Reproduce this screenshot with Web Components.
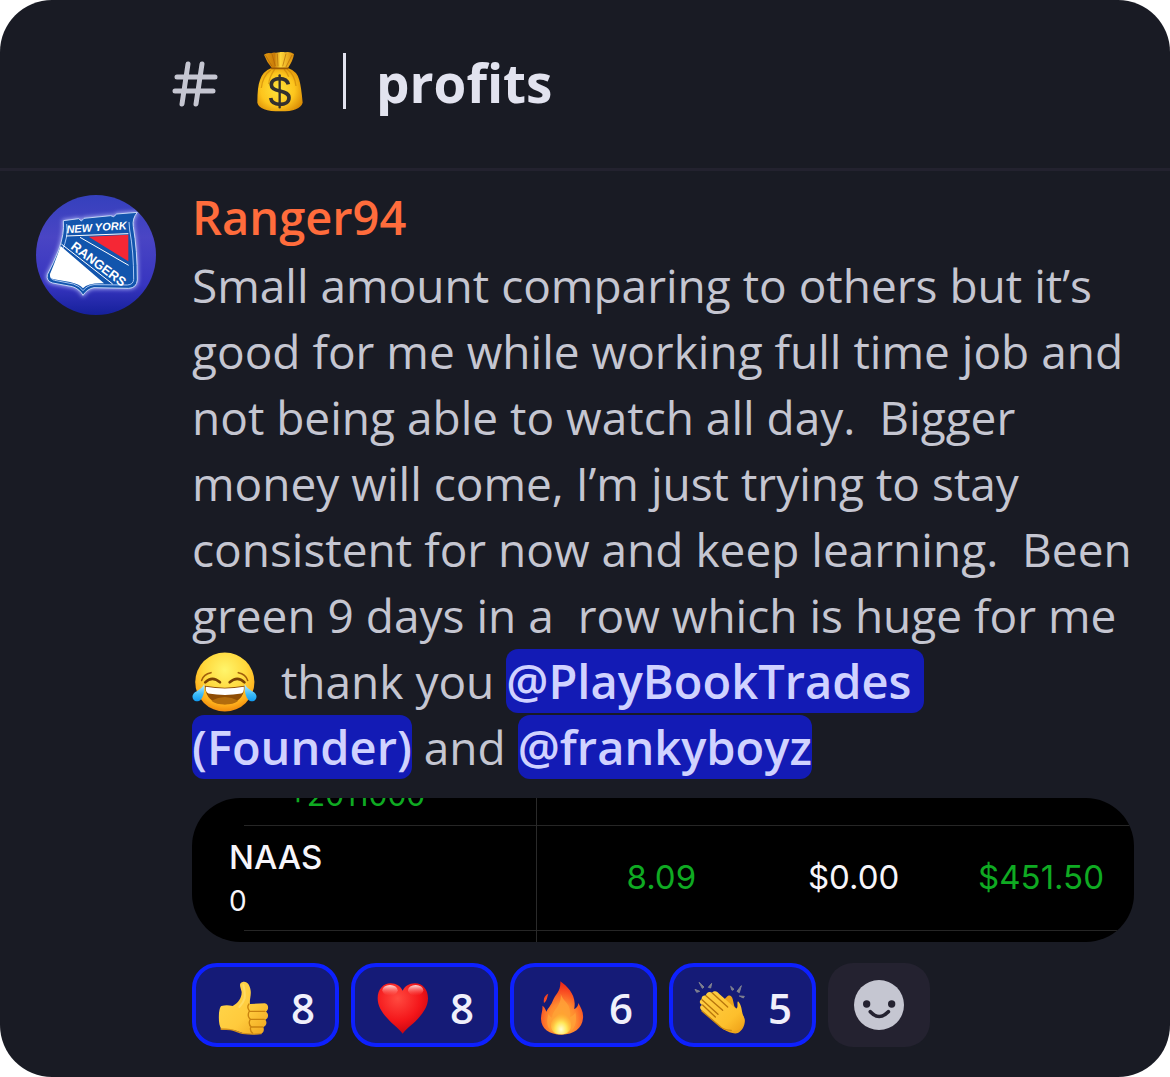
<!DOCTYPE html>
<html lang="en">
<head>
  <meta charset="UTF-8">
  <meta name="viewport" content="width=device-width, initial-scale=1.0">
  <title>profits</title>
  <style>
    body {
      margin: 0;
      background: #fff;
      color: #c5c6d1;
      font-family: "Open Sans", "Noto Sans", sans-serif;
    }
  </style>
</head>
<body>
  <chat-panel>
    <channel-header slot="header" emoji="bag">profits</channel-header>
    <chat-message author="Ranger94">Small amount comparing to others but it’s good for me while working full time job and not being able to watch all day.  Bigger money will come, I’m just trying to stay consistent for now and keep learning.  Been green 9 days in a  row which is huge for me <emoji-icon name="joy"></emoji-icon>  thank you <user-mention>@PlayBookTrades (Founder)</user-mention> and <user-mention>@frankyboyz</user-mention><trade-card slot="attachment"></trade-card><reaction-button slot="reactions" emoji="thumb" count="8"></reaction-button><reaction-button slot="reactions" emoji="heart" count="8"></reaction-button><reaction-button slot="reactions" emoji="fire" count="6"></reaction-button><reaction-button slot="reactions" emoji="clap" count="5"></reaction-button><add-reaction slot="reactions"></add-reaction></chat-message>
  </chat-panel>

  <script>
    const emojis = {
      bag: {
        label: "money bag",
        width: 48,
        height: 60,
        svg: `<svg viewBox="48 36 144 180">
          <defs>
            <radialGradient id="g" cx=".45" cy=".5" r=".62">
              <stop offset="0" stop-color="#ffe23a"/><stop offset=".6" stop-color="#fdc51d"/><stop offset="1" stop-color="#d98a05"/>
            </radialGradient>
            <linearGradient id="n" x1="0" x2="1" y1="0" y2="0">
              <stop offset="0" stop-color="#e39a10"/><stop offset=".35" stop-color="#c97c08"/><stop offset=".55" stop-color="#ffd63a"/><stop offset="1" stop-color="#d98a0a"/>
            </linearGradient>
          </defs>
          <path d="M72 44q10-8 22-4 6-4 14-2l10-1q8-3 18 0 14-3 26 5-2 18-18 42l-48 1Q80 66 72 44z" fill="url(#n)"/>
          <path d="M76 45l20 34M96 42l10 36M112 41l2 38M138 41l-10 38M156 45l-18 36" stroke="#a85f04" stroke-width="3" fill="none" opacity=".6"/>
          <path d="M94 84h50q28 10 34 36 6 22 10 68-8 26-66 26-64 0-70-26 0-48 8-68 8-26 34-36z" fill="url(#g)"/>
          <path d="M92 90q-24 18-28 54M104 88q-16 22-18 44M142 88q22 16 26 50M132 88q10 10 14 22" stroke="#c27a05" stroke-width="4" fill="none" opacity=".55"/>
          <path d="M94 85h50" stroke="#9c5a04" stroke-width="5" stroke-linecap="round"/>
          <path d="M145 133c-3-12-13-17-26-17-15 0-25 7-25 18 0 12 11 16 26 19 16 4 27 8 27 20 0 13-12 20-27 20-16 0-26-7-28-19" fill="none" stroke="#33302f" stroke-width="11"/>
          <path d="M119 106v96" stroke="#33302f" stroke-width="7" stroke-linecap="round"/>
        </svg>`,
      },
      joy: {
        label: "face with tears of joy",
        width: 65,
        height: 62,
        svg: `<svg viewBox="58 32 202 188">
          <defs>
            <radialGradient id="g" cx=".5" cy=".3" r=".72">
              <stop offset="0" stop-color="#fff56b"/><stop offset=".5" stop-color="#ffd83c"/><stop offset=".82" stop-color="#ffae1b"/><stop offset="1" stop-color="#ed8209"/>
            </radialGradient>
            <linearGradient id="t" x1="0" x2="0" y1="0" y2="1">
              <stop offset="0" stop-color="#c8f1ff"/><stop offset=".6" stop-color="#3cbcf8"/><stop offset="1" stop-color="#109af0"/>
            </linearGradient>
          </defs>
          <circle cx="160" cy="126" r="92" fill="url(#g)"/>
          <path d="M98 138q62 11 124 0-4 56-62 57-58-1-62-57z" fill="#8f4d04"/>
          <path d="M118 184q42-22 84 0-16 12-42 12t-42-12z" fill="#b26c0d"/>
          <path d="M101 141q59 10 118 0 2 18-8 21-50 9-102 0-10-4-8-21z" fill="#fff"/>
          <path d="M99 127q22-22 46 0M175 127q24-22 46 0" stroke="#7a4204" stroke-width="8" stroke-linecap="round" fill="none"/>
          <path d="M88 121q6-20 29-24M231 121q-6-20-29-24" stroke="#a2600c" stroke-width="5" stroke-linecap="round" fill="none"/>
          <path d="M96 132c2 20-2 39-11 49-7 7-17 6-22 0-6-7-4-16 4-23 12-8 21-11 29-26z" fill="url(#t)"/>
          <path d="M222 132c-2 20 2 39 11 49 7 7 17 6 22 0 6-7 4-16-4-23-12-8-21-11-29-26z" fill="url(#t)"/>
        </svg>`,
      },
      thumb: {
        label: "thumbs up",
        width: 52,
        height: 54,
        svg: `<svg viewBox="111 80 156 162">
          <defs>
            <linearGradient id="g" x1="0" x2="1" y1="0" y2="1">
              <stop offset="0" stop-color="#ffd94e"/><stop offset=".6" stop-color="#ffca3c"/><stop offset="1" stop-color="#eda31c"/>
            </linearGradient>
          </defs>
          <path d="M124 155q16-4 34 0c16-9 27-22 27-42-4-16-10-26 3-30 14-3 22 10 24 26 2 14-4 26-2 40l44-2c13 2 13 20 4 25 9 6 8 20-2 24 6 7 4 19-6 22 4 9 0 20-10 21-24 2-45 1-58-5-12-5-18-8-32-7-10 0-18-3-25-1-9-12-9-32-8-50q2-18 7-21z" fill="url(#g)"/>
          <path d="M207 149q-8 10 2 22h46M207 172q-6 14 4 23h42M210 196q-6 14 4 22h34M212 219q-3 10 6 18" fill="none" stroke="#c9820f" stroke-width="4" stroke-linecap="round"/>
          <path d="M123 224q18 0 28 2c12 0 22 9 36 11q30 4 56 1" fill="none" stroke="#d5901b" stroke-width="4" stroke-linecap="round"/>
          <path d="M190 92q6 24 4 40-4 14-16 26" fill="none" stroke="#ffe47c" stroke-width="6" stroke-linecap="round" opacity=".6"/>
        </svg>`,
      },
      heart: {
        label: "red heart",
        width: 52,
        height: 54,
        svg: `<svg viewBox="588 80 156 162">
          <defs>
            <radialGradient id="g" cx=".4" cy=".3" r=".75">
              <stop offset="0" stop-color="#ff4a40"/><stop offset=".6" stop-color="#f4161a"/><stop offset="1" stop-color="#c20410"/>
            </radialGradient>
            <linearGradient id="w" x1="0" x2="0" y1="0" y2="1">
              <stop offset="0" stop-color="#fff" stop-opacity=".85"/><stop offset="1" stop-color="#ff6a60" stop-opacity="0"/>
            </linearGradient>
          </defs>
          <path d="M668 238c-10-14-28-26-44-44-18-19-31-38-31-62 0-27 17-45 39-45 17 0 29 9 36 22 7-13 19-22 37-22 22 0 39 18 39 45 0 24-14 43-31 62-17 18-35 30-45 44z" fill="url(#g)"/>
          <ellipse cx="630" cy="108" rx="23" ry="16" fill="url(#w)"/>
          <ellipse cx="707" cy="108" rx="23" ry="16" fill="url(#w)"/>
        </svg>`,
      },
      fire: {
        label: "fire",
        width: 52,
        height: 54,
        svg: `<svg viewBox="105 80 156 162">
          <defs>
            <radialGradient id="g" cx=".5" cy=".75" r=".75">
              <stop offset="0" stop-color="#ffb62c"/><stop offset=".45" stop-color="#ff8a30"/><stop offset=".75" stop-color="#f94c22"/><stop offset="1" stop-color="#e82216"/>
            </radialGradient>
            <radialGradient id="y" cx=".5" cy=".8" r=".65">
              <stop offset="0" stop-color="#fffdd2"/><stop offset=".45" stop-color="#ffe657"/><stop offset="1" stop-color="#ffa52b" stop-opacity=".3"/>
            </radialGradient>
          </defs>
          <path d="M181 81c20 14 42 36 43 66 0 8 0 12-2 17 8-2 13-10 13-18 8 14 16 28 14 46-2 30-28 49-64 49-38 0-61-18-62-47 0-16 6-26 4-40 8 5 10 12 12 18 6-12 14-18 20-34 6-18 24-26 22-57zM145 118c-10 4-16 14-13 28 10-8 9-18 13-28z" fill="url(#g)"/>
          <path d="M182 118c6 22 28 28 28 54 2 6 0 12 0 16 8-2 14-8 16-14 8 38-8 66-42 66-38 0-50-30-38-62 2 6 6 10 10 12 2-26 30-34 26-72z" fill="#ffa338" opacity=".75"/>
          <path d="M186 166c10 16 20 22 26 36 6 22-6 38-29 38s-34-16-29-36c6-16 26-22 32-38z" fill="url(#y)"/>
        </svg>`,
      },
      clap: {
        label: "clapping hands",
        width: 52,
        height: 54,
        svg: `<svg viewBox="582 80 156 162">
          <defs>
            <linearGradient id="g" x1="0" x2="1" y1="0" y2="1">
              <stop offset="0" stop-color="#ffd148"/><stop offset=".7" stop-color="#fdbf2c"/><stop offset="1" stop-color="#ee9f17"/>
            </linearGradient>
          </defs>
          <path d="M597 84l10 18 5-4zM585 105l14 6-9 3zM635 87l-10 12 7 2zM692 96l4 12 6-3zM724 94l-13 17 7 4zM733 126l-15-1 12 6z" fill="#7f8190" stroke="#7f8190" stroke-width="3"/>
          <path d="M680 128c8-8 15-4 18 6l5 22c8 12 26 20 31 38 3 16-6 35-20 42-12 4-28-2-46-12l-34-50z" fill="#eda41c"/>
          <path d="M636 115c8-8 16-4 22 4l50 44c8-2 2-18 6-22 12 12 10 28 16 44 8 20-2 34-16 42-14 6-36 6-50-8l-58-50c-8-6-7-14 0-17-8-5-9-12-1-18-1-8 6-12 12-10 2-9 10-14 19-9z" fill="url(#g)"/>
          <path d="M608 152l38 36M606 136l48 44M618 124l50 44M637 116l46 42" fill="none" stroke="#b8750c" stroke-width="4" stroke-linecap="round"/>
          <path d="M606 170l56 48q14 10 32 10" fill="none" stroke="#d18b12" stroke-width="4" stroke-linecap="round"/>
        </svg>`,
      },
    };

    class EmojiIcon extends HTMLElement {
      constructor() {
        super();
        this.attachShadow({ mode: "open" });
      }

      connectedCallback() {
        const emoji = emojis[this.getAttribute("name")];
        this.setAttribute("role", "img");
        this.setAttribute("aria-label", emoji.label);
        this.shadowRoot.innerHTML = `
          <style>
            :host {
              display: inline-block;
              width: ${emoji.width}px;
              height: ${emoji.height}px;
              line-height: 0;
              white-space: normal;
              vertical-align: -14px;
            }
            svg {
              width: 100%;
              height: 100%;
            }
          </style>
          ${emoji.svg}`;
      }
    }

    class ChatPanel extends HTMLElement {
      constructor() {
        super();
        this.attachShadow({ mode: "open" }).innerHTML = `
          <style>
            :host {
              display: flex;
              flex-direction: column;
              box-sizing: border-box;
              min-height: 100vh;
              background: #191b24;
              border-radius: 52px;
              overflow: hidden;
            }
            main {
              padding: 16px 36px 30px;
            }
          </style>
          <slot name="header"></slot>
          <main><slot></slot></main>`;
      }
    }

    class ChannelHeader extends HTMLElement {
      constructor() {
        super();
        this.attachShadow({ mode: "open" });
      }

      connectedCallback() {
        this.shadowRoot.innerHTML = `
          <style>
            header {
              display: flex;
              align-items: center;
              height: 168px;
              padding: 0 36px 0 172px;
              border-bottom: 3px solid #23222f;
            }
            .hash {
              width: 46px;
              height: 46px;
              margin-right: 38px;
            }
            .divider {
              width: 3px;
              height: 56px;
              margin: 0 30px 6px 39px;
              background: #e2e3ef;
            }
            emoji-icon {
              margin-bottom: 4px;
            }
            h1 {
              margin: 0 0 2px;
              color: #e2e3ef;
              font-size: 53px;
              font-weight: 700;
              line-height: 64px;
            }
          </style>
          <header>
            <svg class="hash" viewBox="0 0 46 46" fill="none" stroke="#c5c6d1" stroke-width="5" stroke-linecap="round" aria-hidden="true">
              <path d="M5 16h38M3 30h38M16 3l-6 40M30 3l-6 40"/>
            </svg>
            <emoji-icon name="${this.getAttribute("emoji")}"></emoji-icon>
            <span class="divider"></span>
            <h1><slot></slot></h1>
          </header>`;
      }
    }

    class UserAvatar extends HTMLElement {
      constructor() {
        super();
        this.attachShadow({ mode: "open" }).innerHTML = `
          <style>
            :host {
              display: block;
              width: 120px;
              height: 120px;
              border-radius: 50%;
              overflow: hidden;
            }
            svg {
              display: block;
            }
            text {
              font-family: "Liberation Sans", sans-serif;
              font-weight: 700;
              fill: #fff;
            }
          </style>
          <svg viewBox="48 45 360 360" width="120" height="120">
            <defs>
              <linearGradient id="bg" x1="0" x2="0" y1="0" y2="1">
                <stop offset="0" stop-color="#3540bd"/><stop offset=".35" stop-color="#4a45c4"/><stop offset=".75" stop-color="#3735c0"/><stop offset="1" stop-color="#15209a"/>
              </linearGradient>
              <filter id="glow" x="-20%" y="-20%" width="140%" height="140%"><feGaussianBlur stdDeviation="6"/></filter>
              <path id="shield" d="M130 122L176 116 184 123 192 115 272 107 281 110 290 102 352 97Q336 116 340 140 352 210 352 300 350 324 326 325L222 323Q202 326 189 346 180 328 158 320L98 309Q78 304 82 284 100 250 116 210 134 160 130 122z"/>
            </defs>
            <rect x="48" y="45" width="360" height="360" fill="url(#bg)"/>
            <use href="#shield" fill="#a9b2f2" stroke="#a9b2f2" stroke-width="6" filter="url(#glow)"/>
            <use href="#shield" fill="#1255ad" stroke="#c3d4f5" stroke-width="3"/>
            <path d="M140 132Q146 170 126 212 108 256 92 286 90 298 104 301L160 312Q180 318 189 332 202 316 222 314L322 315Q340 314 341 298 341 214 329 150L327 126" fill="none" stroke="#a9c7f3" stroke-width="3"/>
            <path d="M122 198Q106 244 90 282 88 294 102 298L150 306Q178 312 189 325 204 308 252 310z" fill="#fff"/>
            <path d="M206 170L325 164V244z" fill="#f52735"/>
            <path d="M138 168L325 161M180 172L326 256M124 192L278 312" fill="none" stroke="#fff" stroke-width="3"/>
            <text x="140" y="160" font-size="33" font-style="italic" transform="rotate(-4 140 160)">NEW YORK</text>
            <text x="150" y="204" font-size="39" transform="rotate(37 150 204)">RANGERS</text>
          </svg>`;
      }
    }

    class ChatMessage extends HTMLElement {
      constructor() {
        super();
        this.attachShadow({ mode: "open" });
      }

      connectedCallback() {
        this.shadowRoot.innerHTML = `
          <style>
            article {
              display: flex;
              gap: 36px;
            }
            user-avatar {
              flex: none;
              margin-top: 8px;
            }
            .content {
              flex: 1;
              min-width: 0;
            }
            h2 {
              margin: 0 0 5px;
              color: #ff6c3c;
              font-size: 47px;
              font-weight: 600;
              line-height: 60px;
            }
            p {
              margin: 0 0 18px;
              font-size: 46px;
              font-weight: 400;
              line-height: 66px;
              white-space: pre-wrap;
            }
            .reactions {
              display: flex;
              flex-wrap: wrap;
              gap: 12px;
              margin-top: 21px;
            }
          </style>
          <article>
            <user-avatar></user-avatar>
            <div class="content">
              <h2>${this.getAttribute("author")}</h2>
              <p><slot></slot></p>
              <slot name="attachment"></slot>
              <div class="reactions"><slot name="reactions"></slot></div>
            </div>
          </article>`;
      }
    }

    // the message keeps its double spaces, so no whitespace around the link here
    class UserMention extends HTMLElement {
      constructor() {
        super();
        this.attachShadow({ mode: "open" }).innerHTML = `<style>
            :host {
              display: inline;
            }
            a {
              color: #d0d2ff;
              background: #131bb5;
              border-radius: 12px;
              font-size: 47px;
              font-weight: 600;
              text-decoration: none;
              -webkit-box-decoration-break: clone;
              box-decoration-break: clone;
            }
          </style><a href="#"><slot></slot></a>`;
      }
    }

    class TradeCard extends HTMLElement {
      constructor() {
        super();
        this.attachShadow({ mode: "open" }).innerHTML = `
          <style>
            :host {
              display: flex;
              flex-direction: column;
              justify-content: flex-end;
              height: 144px;
              border-radius: 48px;
              overflow: hidden;
              background: #000;
              color: #f6f5fa;
              font-family: Inter, "Liberation Sans", sans-serif;
            }
            table {
              width: 100%;
              table-layout: fixed;
              border-collapse: collapse;
              font-size: 33px;
              line-height: 44px;
            }
            .ticker {
              width: 344px;
            }
            .price {
              width: 17%;
            }
            .change {
              width: 22%;
            }
            th, td {
              box-sizing: border-box;
              padding: 0;
              font-weight: 400;
              text-align: right;
            }
            th {
              border-right: 1px solid #2a2a2a;
              background: linear-gradient(#262626, #262626) 52px 0 / 100% 1px no-repeat;
              text-align: left;
            }
            td {
              border-top: 1px solid #262626;
            }
            .previous > * {
              height: 44px;
              padding-bottom: 8px;
              border-top: 0;
              background: none;
            }
            .previous th {
              padding-left: 96px;
              font-size: 30px;
            }
            .position > * {
              height: 105px;
            }
            .position th {
              padding-left: 37px;
            }
            .position td {
              padding-bottom: 2px;
            }
            .position td:nth-child(3) {
              padding-right: 4px;
            }
            .position td:last-child {
              padding-right: 30px;
            }
            .rest > * {
              height: 12px;
            }
            strong, small {
              display: block;
            }
            strong {
              font-weight: 500;
              padding-top: 2px;
            }
            small {
              font-size: 28px;
            }
            .gain {
              color: #0faa22;
            }
          </style>
          <table>
            <colgroup><col class="ticker"><col class="price"><col class="change"><col></colgroup>
            <tbody>
              <tr class="previous"><th class="gain" scope="row">+2011000</th><td></td><td></td><td></td></tr>
              <tr class="position">
                <th scope="row"><strong>NAAS</strong><small>0</small></th>
                <td class="gain">8.09</td>
                <td>$0.00</td>
                <td class="gain">$451.50</td>
              </tr>
              <tr class="rest"><th></th><td></td><td></td><td></td></tr>
            </tbody>
          </table>`;
      }
    }

    class ReactionButton extends HTMLElement {
      constructor() {
        super();
        this.attachShadow({ mode: "open" });
      }

      connectedCallback() {
        this.shadowRoot.innerHTML = `
          <style>
            button {
              display: flex;
              align-items: center;
              justify-content: space-between;
              box-sizing: border-box;
              width: 147px;
              height: 84px;
              padding: 6px 20px 0 21px;
              border: 4px solid #0d20ff;
              border-radius: 25px;
              background: #151b77;
              color: #f0f0fb;
              font: inherit;
              font-size: 42px;
              font-weight: 600;
              line-height: 56px;
              cursor: pointer;
            }
          </style>
          <button type="button" aria-pressed="true">
            <emoji-icon name="${this.getAttribute("emoji")}"></emoji-icon>
            <span>${this.getAttribute("count")}</span>
          </button>`;
      }
    }

    class AddReaction extends HTMLElement {
      constructor() {
        super();
        this.attachShadow({ mode: "open" }).innerHTML = `
          <style>
            button {
              display: flex;
              align-items: center;
              justify-content: center;
              width: 102px;
              height: 84px;
              padding: 0;
              border: 0;
              border-radius: 25px;
              background: #242230;
              cursor: pointer;
            }
          </style>
          <button type="button" aria-label="Add reaction">
            <svg width="50" height="50" viewBox="1061 75 150 150">
              <circle cx="1136" cy="150" r="75" fill="#c5c6d1"/>
              <circle cx="1099" cy="147" r="11" fill="#242230"/>
              <circle cx="1174" cy="147" r="11" fill="#242230"/>
              <path d="M1110 170q26 29 54 0" fill="none" stroke="#242230" stroke-width="11" stroke-linecap="round"/>
            </svg>
          </button>`;
      }
    }

    customElements.define("emoji-icon", EmojiIcon);
    customElements.define("chat-panel", ChatPanel);
    customElements.define("channel-header", ChannelHeader);
    customElements.define("user-avatar", UserAvatar);
    customElements.define("chat-message", ChatMessage);
    customElements.define("user-mention", UserMention);
    customElements.define("trade-card", TradeCard);
    customElements.define("reaction-button", ReactionButton);
    customElements.define("add-reaction", AddReaction);
  </script>
</body>
</html>
